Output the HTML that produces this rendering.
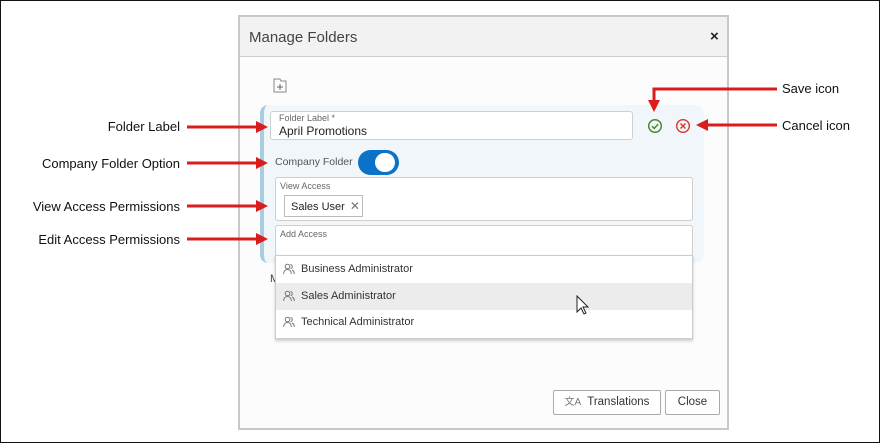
<!DOCTYPE html>
<html><head><style>
*{box-sizing:border-box;margin:0;padding:0}
body{width:880px;height:443px;background:#fff;position:relative;overflow:hidden;font-family:"Liberation Sans",sans-serif;color:#333}
.frame{position:absolute;left:0;top:0;width:880px;height:443px;border:1px solid #111}
.abs{position:absolute}
.dlg{left:238px;top:15px;width:491px;height:415px;border:2px solid #c8c8c8;background:#fcfcfc}
.hdr{left:0;top:0;width:487px;height:40px;background:#f2f2f2;border-bottom:1px solid #cfcfcf}
.lbl{font-size:13px;color:#111;text-align:right;width:180px;left:0}
.box{background:#fff;border:1px solid #cfcfcf;border-radius:3px}
.small{font-size:9px;color:#666}
.row{left:276px;width:416px;height:27px;font-size:11px;color:#333;padding-left:25px;line-height:27px}
.btn{background:#fff;border:1px solid #aaa;border-radius:2px;font-size:11.5px;color:#333;text-align:center;line-height:23px}
</style></head><body>
<div class="frame"></div>
<div class="abs dlg">
 <div class="abs hdr"><div class="abs" style="left:9px;top:12px;font-size:15px;color:#444">Manage Folders</div>
 <div class="abs" style="left:470px;top:11px;font-size:15px;color:#222;font-weight:bold">×</div></div>
</div>
<svg class="abs" style="left:273px;top:78px" width="14" height="15" viewBox="0 0 14 15"><path d="M1 1h6l1 2h5v11H1z" fill="none" stroke="#888"/><path d="M7 6v6M4 9h6" stroke="#666"/></svg>
<div class="abs" style="left:260px;top:105px;width:444px;height:158px;background:#f1f6fa;border-left:4px solid #a8cde0;border-radius:8px"></div>
<div class="abs box" style="left:270px;top:111px;width:363px;height:29px"></div>
<div class="abs small" style="left:279px;top:113px">Folder Label <span style="color:#2a7ab8">*</span></div>
<div class="abs" style="left:279px;top:124px;font-size:12px;color:#222">April Promotions</div>
<svg class="abs" style="left:647px;top:118px" width="16" height="16"><circle cx="8" cy="8" r="6.3" fill="none" stroke="#4a8a2a" stroke-width="1.5"/><path d="M5 8.2l2.2 2.2 4-4.2" fill="none" stroke="#4a8a2a" stroke-width="1.5"/></svg>
<svg class="abs" style="left:675px;top:118px" width="16" height="16"><circle cx="8" cy="8" r="6.3" fill="none" stroke="#d9342a" stroke-width="1.4"/><path d="M5.5 5.5l5 5M10.5 5.5l-5 5" stroke="#d9342a" stroke-width="1.4"/></svg>
<div class="abs" style="left:275px;top:156px;font-size:10.5px;color:#555">Company Folder</div>
<div class="abs" style="left:358px;top:150px;width:41px;height:25px;border-radius:13px;background:#0a72c8"></div>
<div class="abs" style="left:375px;top:153px;width:20px;height:19px;border-radius:10px;background:#fff"></div>
<div class="abs box" style="left:275px;top:177px;width:418px;height:44px"></div>
<div class="abs small" style="left:280px;top:181px">View Access</div>
<div class="abs" style="left:284px;top:195px;width:79px;height:22px;border:1px solid #bbb;background:#fff;font-size:11px;color:#222;line-height:20px;padding-left:6px">Sales User <span style="color:#777;font-size:12px;margin-left:2px">✕</span></div>
<div class="abs box" style="left:275px;top:225px;width:418px;height:31px"></div>
<div class="abs small" style="left:280px;top:229px">Add Access</div>
<div class="abs" style="left:270px;top:273px;font-size:11px;color:#444">M</div>
<div class="abs" style="left:275px;top:255px;width:418px;height:84px;background:#fff;border:1px solid #ccc;box-shadow:0 2px 3px rgba(0,0,0,.2)"></div>
<div class="abs" style="left:276px;top:283px;width:416px;height:27px;background:#ececec"></div>
<div class="abs row" style="top:256px">Business Administrator</div>
<div class="abs row" style="top:283px">Sales Administrator</div>
<div class="abs row" style="top:309px">Technical Administrator</div>
<svg class="abs" style="left:283px;top:263px" width="12" height="66"><g fill="none" stroke="#777" stroke-width="1"><g id="u"><circle cx="4.5" cy="3.5" r="2.3"/><path d="M0.7 11c0-3 1.7-4.5 3.8-4.5s3.8 1.5 3.8 4.5M7.5 1.5a2.2 2.2 0 0 1 0 4.3M9 7c1.5.5 2.3 2 2.3 4"/></g><use href="#u" y="27"/><use href="#u" y="53"/></g></svg>
<svg class="abs" style="left:576px;top:295px" width="14" height="22"><path d="M1 1v16l4-4 3 6 2-1-3-6h5z" fill="#fff" stroke="#222"/></svg>
<div class="abs btn" style="left:553px;top:390px;width:108px;height:25px"><span style="font-size:10px;color:#777;margin-right:6px">文A</span>Translations</div>
<div class="abs btn" style="left:665px;top:390px;width:55px;height:25px">Close</div>
<div class="abs lbl" style="top:119px">Folder Label</div>
<div class="abs lbl" style="top:156px">Company Folder Option</div>
<div class="abs lbl" style="top:199px">View Access Permissions</div>
<div class="abs lbl" style="top:232px">Edit Access Permissions</div>
<div class="abs" style="left:782px;top:81px;font-size:13px;color:#111">Save icon</div>
<div class="abs" style="left:782px;top:118px;font-size:13px;color:#111">Cancel icon</div>
<svg class="abs" style="left:0;top:0" width="880" height="443"><g fill="#d91c1c" stroke="#d91c1c" stroke-width="3">
<line x1="187" y1="127" x2="258" y2="127"/><polygon points="256,121 268,127 256,133" stroke="none"/>
<line x1="187" y1="163" x2="258" y2="163"/><polygon points="256,157 268,163 256,169" stroke="none"/>
<line x1="187" y1="206" x2="258" y2="206"/><polygon points="256,200 268,206 256,212" stroke="none"/>
<line x1="187" y1="239" x2="258" y2="239"/><polygon points="256,233 268,239 256,245" stroke="none"/>
<polyline points="777,89 654,89 654,102" fill="none"/><polygon points="648,100 654,112 660,100" stroke="none"/>
<line x1="777" y1="125" x2="706" y2="125"/><polygon points="708,119 696,125 708,131" stroke="none"/>
</g></svg>
</body></html>
